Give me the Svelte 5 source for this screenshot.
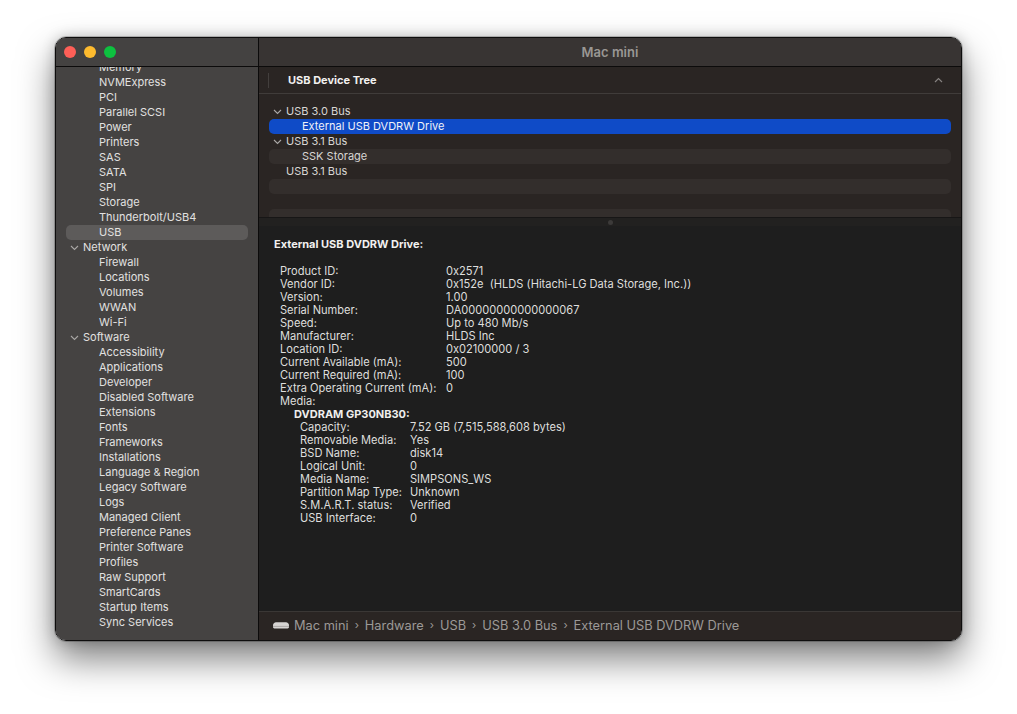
<script>
	const before = ['Memory', 'NVMExpress', 'PCI', 'Parallel SCSI', 'Power', 'Printers', 'SAS', 'SATA', 'SPI', 'Storage', 'Thunderbolt/USB4'];
	const network = ['Firewall', 'Locations', 'Volumes', 'WWAN', 'Wi-Fi'];
	const software = ['Accessibility', 'Applications', 'Developer', 'Disabled Software', 'Extensions', 'Fonts', 'Frameworks', 'Installations', 'Language & Region', 'Legacy Software', 'Logs', 'Managed Client', 'Preference Panes', 'Printer Software', 'Profiles', 'Raw Support', 'SmartCards', 'Startup Items', 'Sync Services'];

	const tree = [
		{ label: 'USB 3.0 Bus', open: true },
		{ label: 'External USB DVDRW Drive', child: true, selected: true },
		{ label: 'USB 3.1 Bus', open: true },
		{ label: 'SSK Storage', child: true, stripe: true },
		{ label: 'USB 3.1 Bus' },
		{ label: '', stripe: true },
		{ label: '' },
		{ label: '', stripe: true }
	];

	const props = [
		['Product ID:', '0x2571'],
		['Vendor ID:', '0x152e  (HLDS (Hitachi-LG Data Storage, Inc.))'],
		['Version:', '1.00'],
		['Serial Number:', 'DA00000000000000067'],
		['Speed:', 'Up to 480 Mb/s'],
		['Manufacturer:', 'HLDS Inc'],
		['Location ID:', '0x02100000 / 3'],
		['Current Available (mA):', '500'],
		['Current Required (mA):', '100'],
		['Extra Operating Current (mA):', '0'],
		['Media:', '']
	];

	const media = [
		['Capacity:', '7.52 GB (7,515,588,608 bytes)'],
		['Removable Media:', 'Yes'],
		['BSD Name:', 'disk14'],
		['Logical Unit:', '0'],
		['Media Name:', 'SIMPSONS_WS'],
		['Partition Map Type:', 'Unknown'],
		['S.M.A.R.T. status:', 'Verified'],
		['USB Interface:', '0']
	];

	const crumbs = ['Mac mini', 'Hardware', 'USB', 'USB 3.0 Bus', 'External USB DVDRW Drive'];
</script>

{#snippet chevron()}
	<svg class="chevron" width="9" height="6" viewBox="0 0 9 6"><path d="M1 1l3.5 3.5L8 1" fill="none" stroke="currentColor" stroke-width="1.1" /></svg>
{/snippet}

<div class="page">
	<div class="window">
		<aside class="sidebar">
			<div class="titlebar">
				<span class="light red"></span>
				<span class="light yellow"></span>
				<span class="light green"></span>
			</div>
			<div class="list">
				<ul>
					{#each before as item}
						<li class="sub">{item}</li>
					{/each}
					<li class="sub active">USB</li>
					<li class="group">{@render chevron()}Network</li>
					{#each network as item}
						<li class="sub">{item}</li>
					{/each}
					<li class="group">{@render chevron()}Software</li>
					{#each software as item}
						<li class="sub">{item}</li>
					{/each}
				</ul>
			</div>
		</aside>

		<main class="main">
			<div class="title">Mac mini</div>

			<section class="top">
				<header class="tree-head">
					<span class="tick"></span>
					<span class="tree-title">USB Device Tree</span>
					<svg class="collapse" width="9" height="6" viewBox="0 0 9 6"><path d="M1 5l3.5-3.5L8 5" fill="none" stroke="currentColor" stroke-width="1.2" /></svg>
				</header>
				<div class="tree">
					{#each tree as row}
						<div class="row" class:selected={row.selected} class:stripe={row.stripe} class:child={row.child}>
							{#if row.open}{@render chevron()}{/if}
							{row.label}
						</div>
					{/each}
				</div>
			</section>

			<div class="splitter"><span class="grip"></span></div>

			<section class="detail">
				<h2>External USB DVDRW Drive:</h2>
				<dl class="props">
					{#each props as [k, v]}
						<dt>{k}</dt>
						<dd>{v}</dd>
					{/each}
				</dl>
				<h3>DVDRAM GP30NB30:</h3>
				<dl class="props nested">
					{#each media as [k, v]}
						<dt>{k}</dt>
						<dd>{v}</dd>
					{/each}
				</dl>
			</section>

			<footer class="path">
				<svg class="mini" width="16" height="7" viewBox="0 0 16 7"><path d="M3 .2h10c1.5 0 3 1.4 3 3V5c0 .8-.6 1.4-1.4 1.4H1.4C.6 6.4 0 5.8 0 5V3.2C0 1.6 1.5.2 3 .2z" fill="#d6d4d2" /><path d="M0 4.4h16" stroke="#8d8a88" stroke-width=".6" /></svg>
				{#each crumbs as crumb, i}
					{#if i > 0}<span class="sep">›</span>{/if}
					<span>{crumb}</span>
				{/each}
			</footer>
		</main>
	</div>
</div>

<style>
	:global(body) {
		background: #fff;
		font-family: Inter, "Liberation Sans", sans-serif;
	}

	.page {
		width: 1017px;
		height: 714px;
		padding: 37px 55px 0;
		box-sizing: border-box;
		overflow: hidden;
	}

	.window {
		width: 907px;
		height: 604px;
		box-sizing: border-box;
		display: flex;
		overflow: hidden;
		border-radius: 11px;
		border: 1px solid #0e0d0d;
		outline: 1px solid rgba(0, 0, 0, 0.2);
		box-shadow: inset 0 0 0 1px #55524f, 0 18px 36px rgba(0, 0, 0, 0.5), 0 0 14px rgba(0, 0, 0, 0.2);
	}

	.sidebar {
		width: 202px;
		flex: none;
		display: flex;
		flex-direction: column;
		background: #454342;
		border-right: 1px solid #0c0b0b;
	}

	.titlebar {
		height: 28px;
		flex: none;
		display: flex;
		align-items: center;
		gap: 8px;
		padding-left: 8px;
		border-bottom: 1px solid #0c0b0b;
		background: #444241;
	}

	.light {
		width: 12px;
		height: 12px;
		border-radius: 50%;
	}

	.red { background: #fe5f57; }
	.yellow { background: #febb2e; }
	.green { background: #0dc13f; }

	.list {
		flex: 1;
		overflow: hidden;
		padding: 0 10px;
	}

	ul {
		list-style: none;
		margin: -7px 0 0;
		padding: 0;
		font-size: 11px;
		color: #e2e1e0;
	}

	li {
		height: 15px;
		line-height: 15px;
		white-space: nowrap;
	}

	.sub {
		padding-left: 33px;
	}

	.group {
		position: relative;
		padding-left: 17px;
	}

	.group .chevron {
		position: absolute;
		left: 4px;
		top: 5px;
		color: #a8a6a4;
	}

	.active {
		background: #5d5b5a;
		border-radius: 5px;
	}

	.main {
		flex: 1;
		min-width: 0;
		display: flex;
		flex-direction: column;
		background: #1e1e1e;
	}

	.title {
		height: 28px;
		flex: none;
		text-align: center;
		line-height: 28px;
		font-size: 13px;
		font-weight: 600;
		color: #9a9794;
		background: #383433;
		border-bottom: 1px solid #0c0b0b;
	}

	.top {
		height: 150px;
		flex: none;
		overflow: hidden;
		background: #2a2523;
	}

	.tree-head {
		height: 26px;
		display: flex;
		align-items: center;
		border-bottom: 1px solid #403c3a;
		padding: 0 18px 0 9px;
	}

	.tick {
		width: 1px;
		height: 15px;
		background: #433f3d;
	}

	.tree-title {
		margin-left: 19px;
		font-size: 11px;
		font-weight: 700;
		color: #f2f1f0;
	}

	.collapse {
		margin-left: auto;
		color: #85817f;
	}

	.tree {
		margin: 10px 10px 0;
		font-size: 11px;
		color: #d8d6d4;
	}

	.row {
		position: relative;
		height: 15px;
		line-height: 15px;
		padding-left: 17px;
		border-radius: 5px;
		white-space: nowrap;
	}

	.row .chevron {
		position: absolute;
		left: 4px;
		top: 5px;
		color: #a8a6a4;
	}

	.row.child {
		padding-left: 33px;
	}

	.stripe {
		background: #332e2c;
	}

	.selected {
		background: #0f4bc7;
		color: #f0f2f8;
	}

	.splitter {
		height: 9px;
		flex: none;
		display: flex;
		align-items: center;
		justify-content: center;
		background: #222120;
		border-top: 1px solid #171616;
		box-sizing: border-box;
	}

	.grip {
		width: 5px;
		height: 5px;
		border-radius: 50%;
		background: #3c3a39;
	}

	.detail {
		flex: 1;
		min-height: 0;
		padding: 12px 15px 0;
		font-size: 11.1px;
		color: #dfdedd;
		background: #1e1e1e;
	}

	h2 {
		margin: 0 0 14px;
		font-size: 11px;
		line-height: 13px;
		font-weight: 700;
		color: #f2f1f0;
	}

	h3 {
		margin: 0 0 0 20px;
		font-size: 11px;
		line-height: 13px;
		font-weight: 700;
		color: #efeeed;
	}

	.props {
		display: grid;
		grid-template-columns: 166px 1fr;
		margin: 0 0 0 6px;
		line-height: 13px;
	}

	.props.nested {
		grid-template-columns: 110px 1fr;
		margin-left: 26px;
	}

	dt, dd {
		margin: 0;
		white-space: pre;
	}

	.path {
		height: 29px;
		flex: none;
		display: flex;
		align-items: center;
		gap: 5px;
		padding: 0 0 2px 14px;
		font-size: 12.8px;
		color: #9c9997;
		background: #2a2523;
		border-top: 1px solid #3a3735;
		box-sizing: border-box;
	}

	.mini {
		margin-right: 0;
	}

	.sep {
		padding: 0 1px;
		font-size: 11px;
	}
</style>
